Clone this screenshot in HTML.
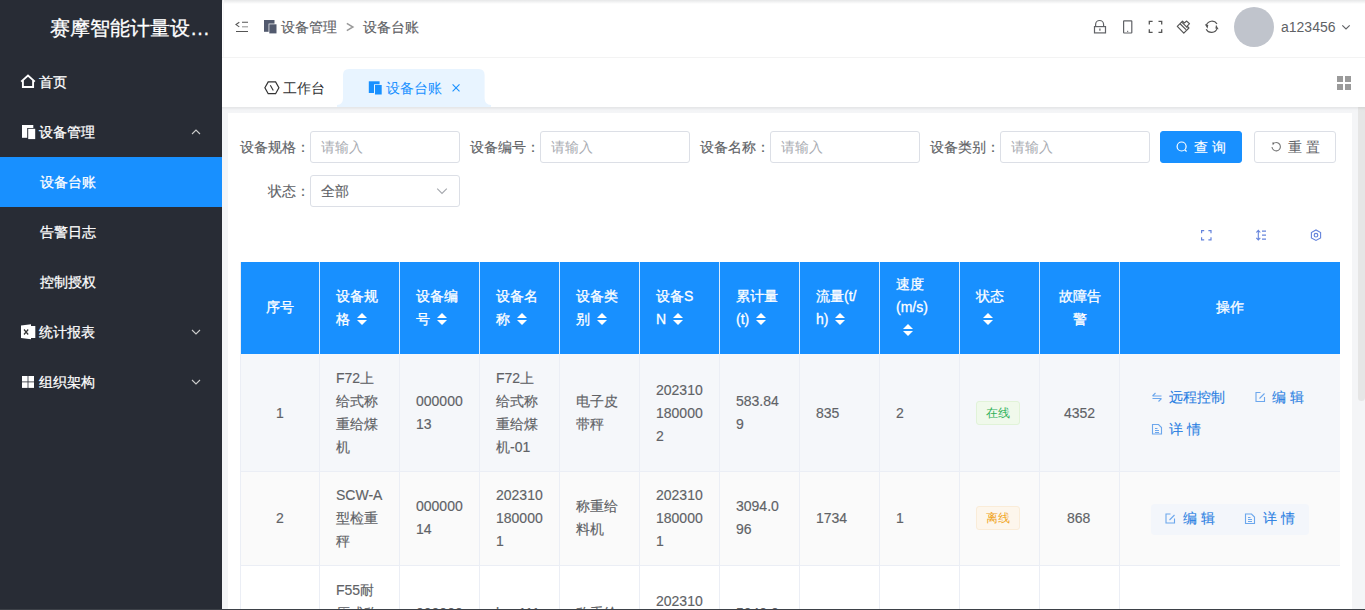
<!DOCTYPE html>
<html><head><meta charset="utf-8">
<style>
*{box-sizing:border-box;margin:0;padding:0}
html,body{width:1365px;height:610px;overflow:hidden;background:#fff;font-family:"Liberation Sans",sans-serif;font-size:14px;color:#606266}
.a{position:absolute}
svg{position:absolute;overflow:visible}
#side{position:absolute;left:0;top:0;width:222px;height:610px;background:#282c35}
#logo{position:absolute;left:50px;top:15px;font-size:20px;line-height:26px;color:#fff;white-space:nowrap;-webkit-text-stroke:0.3px #fff}
.mi{position:absolute;left:0;width:222px;height:50px;color:#fff;font-size:14px;line-height:50px;white-space:nowrap}
.mi .t{position:absolute;left:39px;top:0;-webkit-text-stroke:0.25px #fff}
.mi.sub .t{left:40px}
.mi.act{background:#1890ff}
#hdr{position:absolute;left:222px;top:0;width:1143px;height:57px;background:#fff}
#hdr .topsh{position:absolute;left:0;top:0;width:100%;height:4px;background:linear-gradient(#e6e7e8,#fff)}
#hline{position:absolute;left:222px;top:57px;width:1143px;height:1px;background:#f3f3f3}
#tabs{position:absolute;left:222px;top:58px;width:1143px;height:49px;background:#fff}
#content{position:absolute;left:222px;top:107px;width:1143px;height:503px;background:#f4f5f7}
#sh{position:absolute;left:222px;top:107px;width:1143px;height:6px;background:linear-gradient(rgba(0,0,0,0.058) 0px,rgba(0,0,0,0.058) 1px,rgba(0,0,0,0.025) 2px,rgba(0,0,0,0.005) 3.5px,rgba(0,0,0,0) 6px)}
#card{position:absolute;left:228px;top:113px;width:1124px;height:497px;background:#fff}
#sb{position:absolute;left:1358px;top:107px;width:7px;height:503px}
#thumb{position:absolute;left:0;top:0;width:7px;height:294px;background:#e6e6e6;border-radius:0 0 3.5px 3.5px}
.tx{position:absolute;white-space:nowrap;line-height:20px}
.lbl{position:absolute;top:131px;height:32px;line-height:32px;width:70px;color:#606266;white-space:nowrap;text-align:right}
.inp{position:absolute;top:131px;width:150px;height:32px;border:1px solid #dcdfe6;border-radius:3px;line-height:30px;padding-left:10px;color:#a9acb2;background:#fff;white-space:nowrap}
.btn{position:absolute;top:131px;width:82px;height:32px;border-radius:3px;line-height:30px;white-space:nowrap}
/* table */
#tbl{position:absolute;left:240px;top:262px;width:1100px;height:348px;overflow:hidden;border-left:1px solid #ebeef5}
.th{position:absolute;top:0;height:92px;background:#1890ff;color:#fff;-webkit-text-stroke:0.3px #fff;border-right:1px solid #d6ebff}
.cell{position:absolute;left:16px;line-height:23px;white-space:nowrap}
.th .cell{margin-top:1px}
.row{position:absolute;left:0;width:1100px;border-bottom:1px solid #ebeef5}
.td{position:absolute;top:0;bottom:0;border-right:1px solid #ebeef5}
.caret{display:inline-block;width:10px;height:12px;margin-left:7px;position:relative;vertical-align:-1px}
.caret:before{content:"";position:absolute;left:0;top:0;border:5px solid transparent;border-top:0;border-bottom:5px solid #fff}
.caret:after{content:"";position:absolute;left:0;top:7px;border:5px solid transparent;border-bottom:0;border-top:5px solid #fff}
.lnk{color:#2a80e2}
.row .cell.lnk{-webkit-text-stroke:0.1px currentColor}
.r1 .cell,.r1 .tag{margin-top:2px}
.row .cell,.lbl,.tx,.inp.v,.btn span{-webkit-text-stroke:0.15px currentColor}
.r3 .cell{margin-top:1px}
.tag{position:absolute;width:44px;height:24px;border-radius:3px;font-size:12px;line-height:22px;text-align:center}
</style></head><body>
<!-- SIDEBAR -->
<div id="side">
  <div id="logo">赛摩智能计量设…</div>
  <div class="mi" style="top:57px"><span class="t">首页</span></div>
  <div class="mi" style="top:107px"><span class="t">设备管理</span></div>
  <div class="mi sub act" style="top:157px"><span class="t">设备台账</span></div>
  <div class="mi sub" style="top:207px"><span class="t">告警日志</span></div>
  <div class="mi sub" style="top:257px"><span class="t">控制授权</span></div>
  <div class="mi" style="top:307px"><span class="t">统计报表</span></div>
  <div class="mi" style="top:357px"><span class="t">组织架构</span></div>
  <svg width="222" height="610" style="left:0;top:0">
    <!-- home -->
    <path d="M21.2 81.6 L28 75.6 L34.8 81.6 M22.9 80.4 V87 H33.1 V80.4" fill="none" stroke="#fff" stroke-width="1.9" stroke-linejoin="miter"/>
    <!-- docs -->
    <rect x="22" y="125" width="11.3" height="12.8" fill="#fff"/>
    <rect x="27.2" y="128" width="8.6" height="11.6" fill="#282c35"/>
    <rect x="28.2" y="128.8" width="7" height="10.3" fill="#fff"/>
    <!-- chevrons -->
    <path d="M192 134 L196 130 L200 134" fill="none" stroke="#ccc" stroke-width="1.1"/>
    <path d="M192 330 L196 334 L200 330" fill="none" stroke="#ccc" stroke-width="1.1"/>
    <path d="M192 380 L196 384 L200 380" fill="none" stroke="#ccc" stroke-width="1.1"/>
    <!-- excel -->
    <path d="M21 325.6 L31 324.3 V339.3 L21 338 Z" fill="#fff"/>
    <rect x="31" y="326" width="4.3" height="12" fill="#fff"/>
    <path d="M24 329.5 L28.2 334.5 M28.2 329.5 L24 334.5" stroke="#333" stroke-width="1.2"/>
    <!-- grid -->
    <rect x="22" y="376" width="5.6" height="5.5" fill="#fff"/>
    <rect x="28.4" y="376" width="5.6" height="5.5" fill="#fff"/>
    <rect x="22" y="382.3" width="5.6" height="5.6" fill="#fff"/>
    <rect x="28.4" y="382.3" width="5.6" height="5.6" fill="#fff"/>
  </svg>
</div>

<!-- HEADER -->
<div id="hdr"><div class="topsh"></div><div class="a" style="left:1px;top:0;width:1px;height:107px;background:#f7f7f8"></div></div>
<div id="hline"></div>
<svg width="1365" height="57" style="left:0;top:0">
  <!-- hamburger -->
  <path d="M239.3 22.3 L236 24.6 L239.3 26.9" fill="none" stroke="#555" stroke-width="1.1"/>
  <path d="M242 22.3 H248 M236 31.5 H248" stroke="#555" stroke-width="1.1"/><path d="M242 26.8 H248" stroke="#999" stroke-width="1.1"/>
  <!-- bc icon -->
  <rect x="264" y="20" width="10.5" height="11.8" fill="#525a6e"/>
  <rect x="268.6" y="23.6" width="8.6" height="10.6" fill="#fff"/>
  <rect x="269.3" y="24.3" width="7.2" height="9.1" fill="#525a6e"/>
  <!-- lock -->
  <path d="M1095.6 26.6 V24.5 A3.8 3.8 0 0 1 1103.6 24.5 V26.6" fill="none" stroke="#606266" stroke-width="1.2"/>
  <rect x="1094.5" y="26.6" width="11" height="6.3" fill="none" stroke="#606266" stroke-width="1.2"/>
  <path d="M1099.9 28.4 V30.7" stroke="#606266" stroke-width="1.2"/>
  <!-- phone -->
  <rect x="1123.6" y="20.8" width="8.2" height="12.2" rx="0.5" fill="none" stroke="#606266" stroke-width="1.2"/>
  <path d="M1127.7 30.8 V32" stroke="#606266" stroke-width="1"/>
  <!-- fullscreen -->
  <path d="M1149.3 24.6 V21.4 H1152.6 M1158.5 21.4 H1161.7 V24.6 M1161.7 29.2 V32.4 H1158.5 M1152.6 32.4 H1149.3 V29.2" fill="none" stroke="#555" stroke-width="1.3"/>
  <!-- brush -->
  <path d="M1177.3 26.3 L1182.5 21.1 L1184.3 22.9 L1186.7 21.1 L1189.5 23.7 L1187.2 26.1 L1188.9 28 L1183.8 33.2 Z M1180.3 24 L1186 29.6 M1182 22.4 L1187.3 27.6" fill="none" stroke="#555" stroke-width="1.2" stroke-linejoin="round"/>
  <!-- refresh -->
  <path d="M1206.3 25.3 A6 6 0 0 1 1217 23.9 M1217.2 28.4 A6 6 0 0 1 1206.2 29.2" fill="none" stroke="#555" stroke-width="1.2"/>
  <path d="M1204.8 24.2 L1207.5 28.8 L1208.3 25 Z M1218.6 29.2 L1216 24.8 L1215.4 28.5 Z" fill="#555"/>
  <path d="M346.8 23.4 L352.9 27 L346.8 30.6" fill="none" stroke="#9a9a9a" stroke-width="1.5"/>
  <!-- user chevron -->
  <path d="M1342.3 25.4 L1346 28.9 L1349.7 25.4" fill="none" stroke="#606266" stroke-width="1.2"/>
</svg>
<div class="a" style="left:1234px;top:7px;width:40px;height:40px;border-radius:50%;background:#c0c4cc"></div>
<div class="tx" style="left:1281px;top:17px;color:#606266;font-size:14px;-webkit-text-stroke:0">a123456</div>
<div class="tx" style="left:281px;top:17px;color:#5f6266">设备管理</div>

<div class="tx" style="left:363px;top:17px;color:#5f6266">设备台账</div>

<!-- TABS -->
<div id="tabs"></div>
<svg width="1365" height="50" style="left:0;top:57px">
  <path d="M337 50 V48 Q343 48 343 41 V18 Q343 12 349 12 H478.6 Q484.6 12 484.6 18 V41 Q484.6 48 491 48 V50 Z" fill="#e8f4ff"/>
  <!-- hexagon -->
  <path d="M268.2 24.9 H275.6 L278.9 30.8 L275.6 36.7 H268.2 L264.9 30.8 Z" fill="none" stroke="#333" stroke-width="1.2"/>
  <path d="M270.3 28.2 L273.3 33.5" stroke="#333" stroke-width="1.1"/>
  <!-- doc blue -->
  <rect x="368.8" y="24.3" width="10.8" height="11.7" fill="#1890ff"/>
  <rect x="374" y="27.3" width="8.6" height="11.2" fill="#e8f4ff"/>
  <rect x="375" y="28" width="6.7" height="9.5" fill="#1890ff"/>
  <!-- close -->
  <path d="M452.6 27.4 L459.5 34.3 M459.5 27.4 L452.6 34.3" stroke="#1890ff" stroke-width="1.1"/>
  <!-- grid -->
  <rect x="1337" y="19" width="6" height="6" fill="#9a9a9a"/>
  <rect x="1345" y="19" width="6" height="6" fill="#9a9a9a"/>
  <rect x="1337" y="27" width="6" height="6" fill="#9a9a9a"/>
  <rect x="1345" y="27" width="6" height="6" fill="#9a9a9a"/>
</svg>
<div class="tx" style="left:283px;top:78px;color:#303133;-webkit-text-stroke:0">工作台</div>
<div class="tx" style="left:386px;top:78px;color:#1890ff;-webkit-text-stroke:0">设备台账</div>

<!-- CONTENT -->
<div id="content"></div>
<div id="card"></div>
<div id="sb"><div id="thumb"></div></div>
<div id="sh"></div>

<!-- FORM -->
<div class="lbl" style="left:240px">设备规格：</div>
<div class="inp" style="left:310px">请输入</div>
<div class="lbl" style="left:470px">设备编号：</div>
<div class="inp" style="left:540px">请输入</div>
<div class="lbl" style="left:700px">设备名称：</div>
<div class="inp" style="left:770px">请输入</div>
<div class="lbl" style="left:930px">设备类别：</div>
<div class="inp" style="left:1000px">请输入</div>
<div class="btn" style="left:1160px;background:#1890ff;border:1px solid #1890ff;color:#fff"><span class="a" style="left:33px;top:0">查 询</span></div>
<div class="btn" style="left:1254px;background:#fff;border:1px solid #dcdfe6;color:#606266"><span class="a" style="left:33px;top:0;-webkit-text-stroke:0">重 置</span></div>
<svg width="1365" height="50" style="left:0;top:130px">
  <circle cx="1181.6" cy="16.5" r="4.5" fill="none" stroke="#fff" stroke-width="1.2"/>
  <path d="M1184.9 19.8 L1186.6 21.5" stroke="#fff" stroke-width="1.2"/>
  <path d="M1272 17 A4.2 4.2 0 1 0 1275.3 12.6" fill="none" stroke="#777" stroke-width="1.1"/>
  <path d="M1272.3 12.6 L1275.3 12.6 L1272.8 15.2 Z" fill="#666"/>
</svg>
<div class="lbl" style="left:240px;top:175px">状态：</div>
<div class="inp v" style="left:310px;top:175px;color:#606266">全部</div>
<svg width="1365" height="20" style="left:0;top:182px">
  <path d="M437.2 6.6 L442 11.4 L446.8 6.6" fill="none" stroke="#a4a7ad" stroke-width="1.1"/>
</svg>

<!-- TOOLBAR -->
<svg width="1365" height="20" style="left:0;top:225px">
  <path d="M1201.6 8.2 V5.6 H1204.2 M1208.4 5.6 H1211 V8.2 M1211 12.2 V14.8 H1208.4 M1204.2 14.8 H1201.6 V12.2" fill="none" stroke="#6584dc" stroke-width="1.2"/>
  <path d="M1258.3 5.5 V14.8 M1256.3 7.5 L1258.3 5.3 L1260.3 7.5 M1256.3 12.8 L1258.3 15 L1260.3 12.8" fill="none" stroke="#6584dc" stroke-width="1.1"/>
  <path d="M1262 6.2 H1266 M1262 10.2 H1266 M1262 14.2 H1266" stroke="#6584dc" stroke-width="1.2"/>
  <path d="M1313.3 5.6 H1318.7 L1321.2 10.2 L1318.7 14.8 H1313.3 L1310.8 10.2 Z" fill="none" stroke="#6584dc" stroke-width="1.1" transform="rotate(90 1316 10.2)"/>
  <circle cx="1316" cy="10.2" r="1.8" fill="none" stroke="#6584dc" stroke-width="1.2"/>
</svg>

<!-- TABLE -->
<div id="tbl">
  <div class="th" style="left:0;width:79px"><div class="cell" style="left:25px;top:33px">序号</div></div>
  <div class="th" style="left:79px;width:80px"><div class="cell" style="top:22px">设备规<br>格<i class="caret"></i></div></div>
  <div class="th" style="left:159px;width:80px"><div class="cell" style="top:22px">设备编<br>号<i class="caret"></i></div></div>
  <div class="th" style="left:239px;width:80px"><div class="cell" style="top:22px">设备名<br>称<i class="caret"></i></div></div>
  <div class="th" style="left:319px;width:80px"><div class="cell" style="top:22px">设备类<br>别<i class="caret"></i></div></div>
  <div class="th" style="left:399px;width:80px"><div class="cell" style="top:22px">设备S<br>N<i class="caret"></i></div></div>
  <div class="th" style="left:479px;width:80px"><div class="cell" style="top:22px">累计量<br>(t)<i class="caret"></i></div></div>
  <div class="th" style="left:559px;width:80px"><div class="cell" style="top:22px">流量(t/<br>h)<i class="caret"></i></div></div>
  <div class="th" style="left:639px;width:80px"><div class="cell" style="top:10px">速度<br>(m/s)<br><i class="caret" style="margin-left:7px"></i></div></div>
  <div class="th" style="left:719px;width:80px"><div class="cell" style="top:22px">状态<br><i class="caret" style="margin-left:7px"></i></div></div>
  <div class="th" style="left:799px;width:80px"><div class="cell" style="top:22px;left:0;width:79px;text-align:center">故障告<br>警</div></div>
  <div class="th" style="left:879px;width:221px;border-right:0"><div class="cell" style="left:96px;top:33px">操作</div></div>

  <!-- row 1 -->
  <div class="row r1" style="top:92px;height:118px;background:#f5f7fa">
    <div class="td" style="left:0;width:79px"><div class="cell" style="left:35px;top:46px">1</div></div>
    <div class="td" style="left:79px;width:80px"><div class="cell" style="top:11px">F72上<br>给式称<br>重给煤<br>机</div></div>
    <div class="td" style="left:159px;width:80px"><div class="cell" style="top:34px">000000<br>13</div></div>
    <div class="td" style="left:239px;width:80px"><div class="cell" style="top:11px">F72上<br>给式称<br>重给煤<br>机-01</div></div>
    <div class="td" style="left:319px;width:80px"><div class="cell" style="top:34px">电子皮<br>带秤</div></div>
    <div class="td" style="left:399px;width:80px"><div class="cell" style="top:23px">202310<br>180000<br>2</div></div>
    <div class="td" style="left:479px;width:80px"><div class="cell" style="top:34px">583.84<br>9</div></div>
    <div class="td" style="left:559px;width:80px"><div class="cell" style="top:46px">835</div></div>
    <div class="td" style="left:639px;width:80px"><div class="cell" style="top:46px">2</div></div>
    <div class="td" style="left:719px;width:80px"><div class="tag" style="left:16px;top:45px;background:#f0f9eb;border:1px solid #e1f3d8;color:#2fb15a">在线</div></div>
    <div class="td" style="left:799px;width:80px"><div class="cell" style="left:24px;top:46px">4352</div></div>
    <div class="td" style="left:879px;width:221px;border-right:0">
      <div class="cell lnk" style="left:49px;top:30px">远程控制</div>
      <div class="cell lnk" style="left:152px;top:30px">编 辑</div>
      <div class="cell lnk" style="left:49px;top:62px">详 情</div>
    </div>
  </div>
  <!-- row 2 -->
  <div class="row r2" style="top:210px;height:94px;background:#fafafa">
    <div class="td" style="left:0;width:79px"><div class="cell" style="left:35px;top:35px">2</div></div>
    <div class="td" style="left:79px;width:80px"><div class="cell" style="top:12px">SCW-A<br>型检重<br>秤</div></div>
    <div class="td" style="left:159px;width:80px"><div class="cell" style="top:23px">000000<br>14</div></div>
    <div class="td" style="left:239px;width:80px"><div class="cell" style="top:12px">202310<br>180000<br>1</div></div>
    <div class="td" style="left:319px;width:80px"><div class="cell" style="top:23px">称重给<br>料机</div></div>
    <div class="td" style="left:399px;width:80px"><div class="cell" style="top:12px">202310<br>180000<br>1</div></div>
    <div class="td" style="left:479px;width:80px"><div class="cell" style="top:23px">3094.0<br>96</div></div>
    <div class="td" style="left:559px;width:80px"><div class="cell" style="top:35px">1734</div></div>
    <div class="td" style="left:639px;width:80px"><div class="cell" style="top:35px">1</div></div>
    <div class="td" style="left:719px;width:80px"><div class="tag" style="left:16px;top:34px;background:#fdf6ec;border:1px solid #faecd8;color:#f0a51e">离线</div></div>
    <div class="td" style="left:799px;width:80px"><div class="cell" style="left:27px;top:35px">868</div></div>
    <div class="td" style="left:879px;width:221px;border-right:0">
      <div class="a" style="left:31px;top:32px;width:158px;height:31px;background:#f3f6fb;border-radius:4px"></div>
      <div class="cell lnk" style="left:63px;top:35px">编 辑</div>
      <div class="cell lnk" style="left:143px;top:35px">详 情</div>
    </div>
  </div>
  <!-- row 3 -->
  <div class="row r3" style="top:304px;height:120px;background:#fff">
    <div class="td" style="left:0;width:79px"></div>
    <div class="td" style="left:79px;width:80px"><div class="cell" style="top:12px">F55耐<br>压式称</div></div>
    <div class="td" style="left:159px;width:80px"><div class="cell" style="top:35px">000000</div></div>
    <div class="td" style="left:239px;width:80px"><div class="cell" style="top:35px">hw-111</div></div>
    <div class="td" style="left:319px;width:80px"><div class="cell" style="top:35px">称重给</div></div>
    <div class="td" style="left:399px;width:80px"><div class="cell" style="top:23px">202310</div></div>
    <div class="td" style="left:479px;width:80px"><div class="cell" style="top:35px">5040.0</div></div>
    <div class="td" style="left:559px;width:80px"></div>
    <div class="td" style="left:639px;width:80px"></div>
    <div class="td" style="left:719px;width:80px"></div>
    <div class="td" style="left:799px;width:80px"></div>
    <div class="td" style="left:879px;width:221px;border-right:0"></div>
  </div>
</div>
<!-- op icons -->
<svg width="1365" height="610" style="left:0;top:0">
  <g fill="none" stroke="#4a94ea" stroke-width="1.1" opacity="0.8">
    <!-- remote -->
    <path d="M1152.5 396 L1155.5 393 M1152.5 396 H1161.5 M1161.5 398.5 H1152.5 M1161.5 398.5 L1158.5 401.5"/>
    <!-- edit 1 -->
    <path d="M1260.5 392.5 H1256 V401.5 H1264.5 V397"/>
    <path d="M1259.5 398.5 L1264.5 393.5"/>
    <!-- detail 1 -->
    <path d="M1152.5 424.5 H1158.5 L1161.5 427.5 V434 H1152.5 Z M1155 428.5 H1157.5 M1155 430.5 H1159 M1155 432.5 H1159"/>
    <!-- edit 2 -->
    <path d="M1170.5 514 H1166 V523 H1174.5 V518.5"/>
    <path d="M1169.5 520 L1174.5 515"/>
    <!-- detail 2 -->
    <path d="M1245.5 514 H1251.5 L1254.5 517 V523.5 H1245.5 Z M1248 517.5 H1250.5 M1248 519.5 H1252 M1248 521.5 H1252"/>
  </g>
</svg>
<div class="a" style="left:0;top:609px;width:1365px;height:1px;background:#3d4148"></div>
</body></html>
